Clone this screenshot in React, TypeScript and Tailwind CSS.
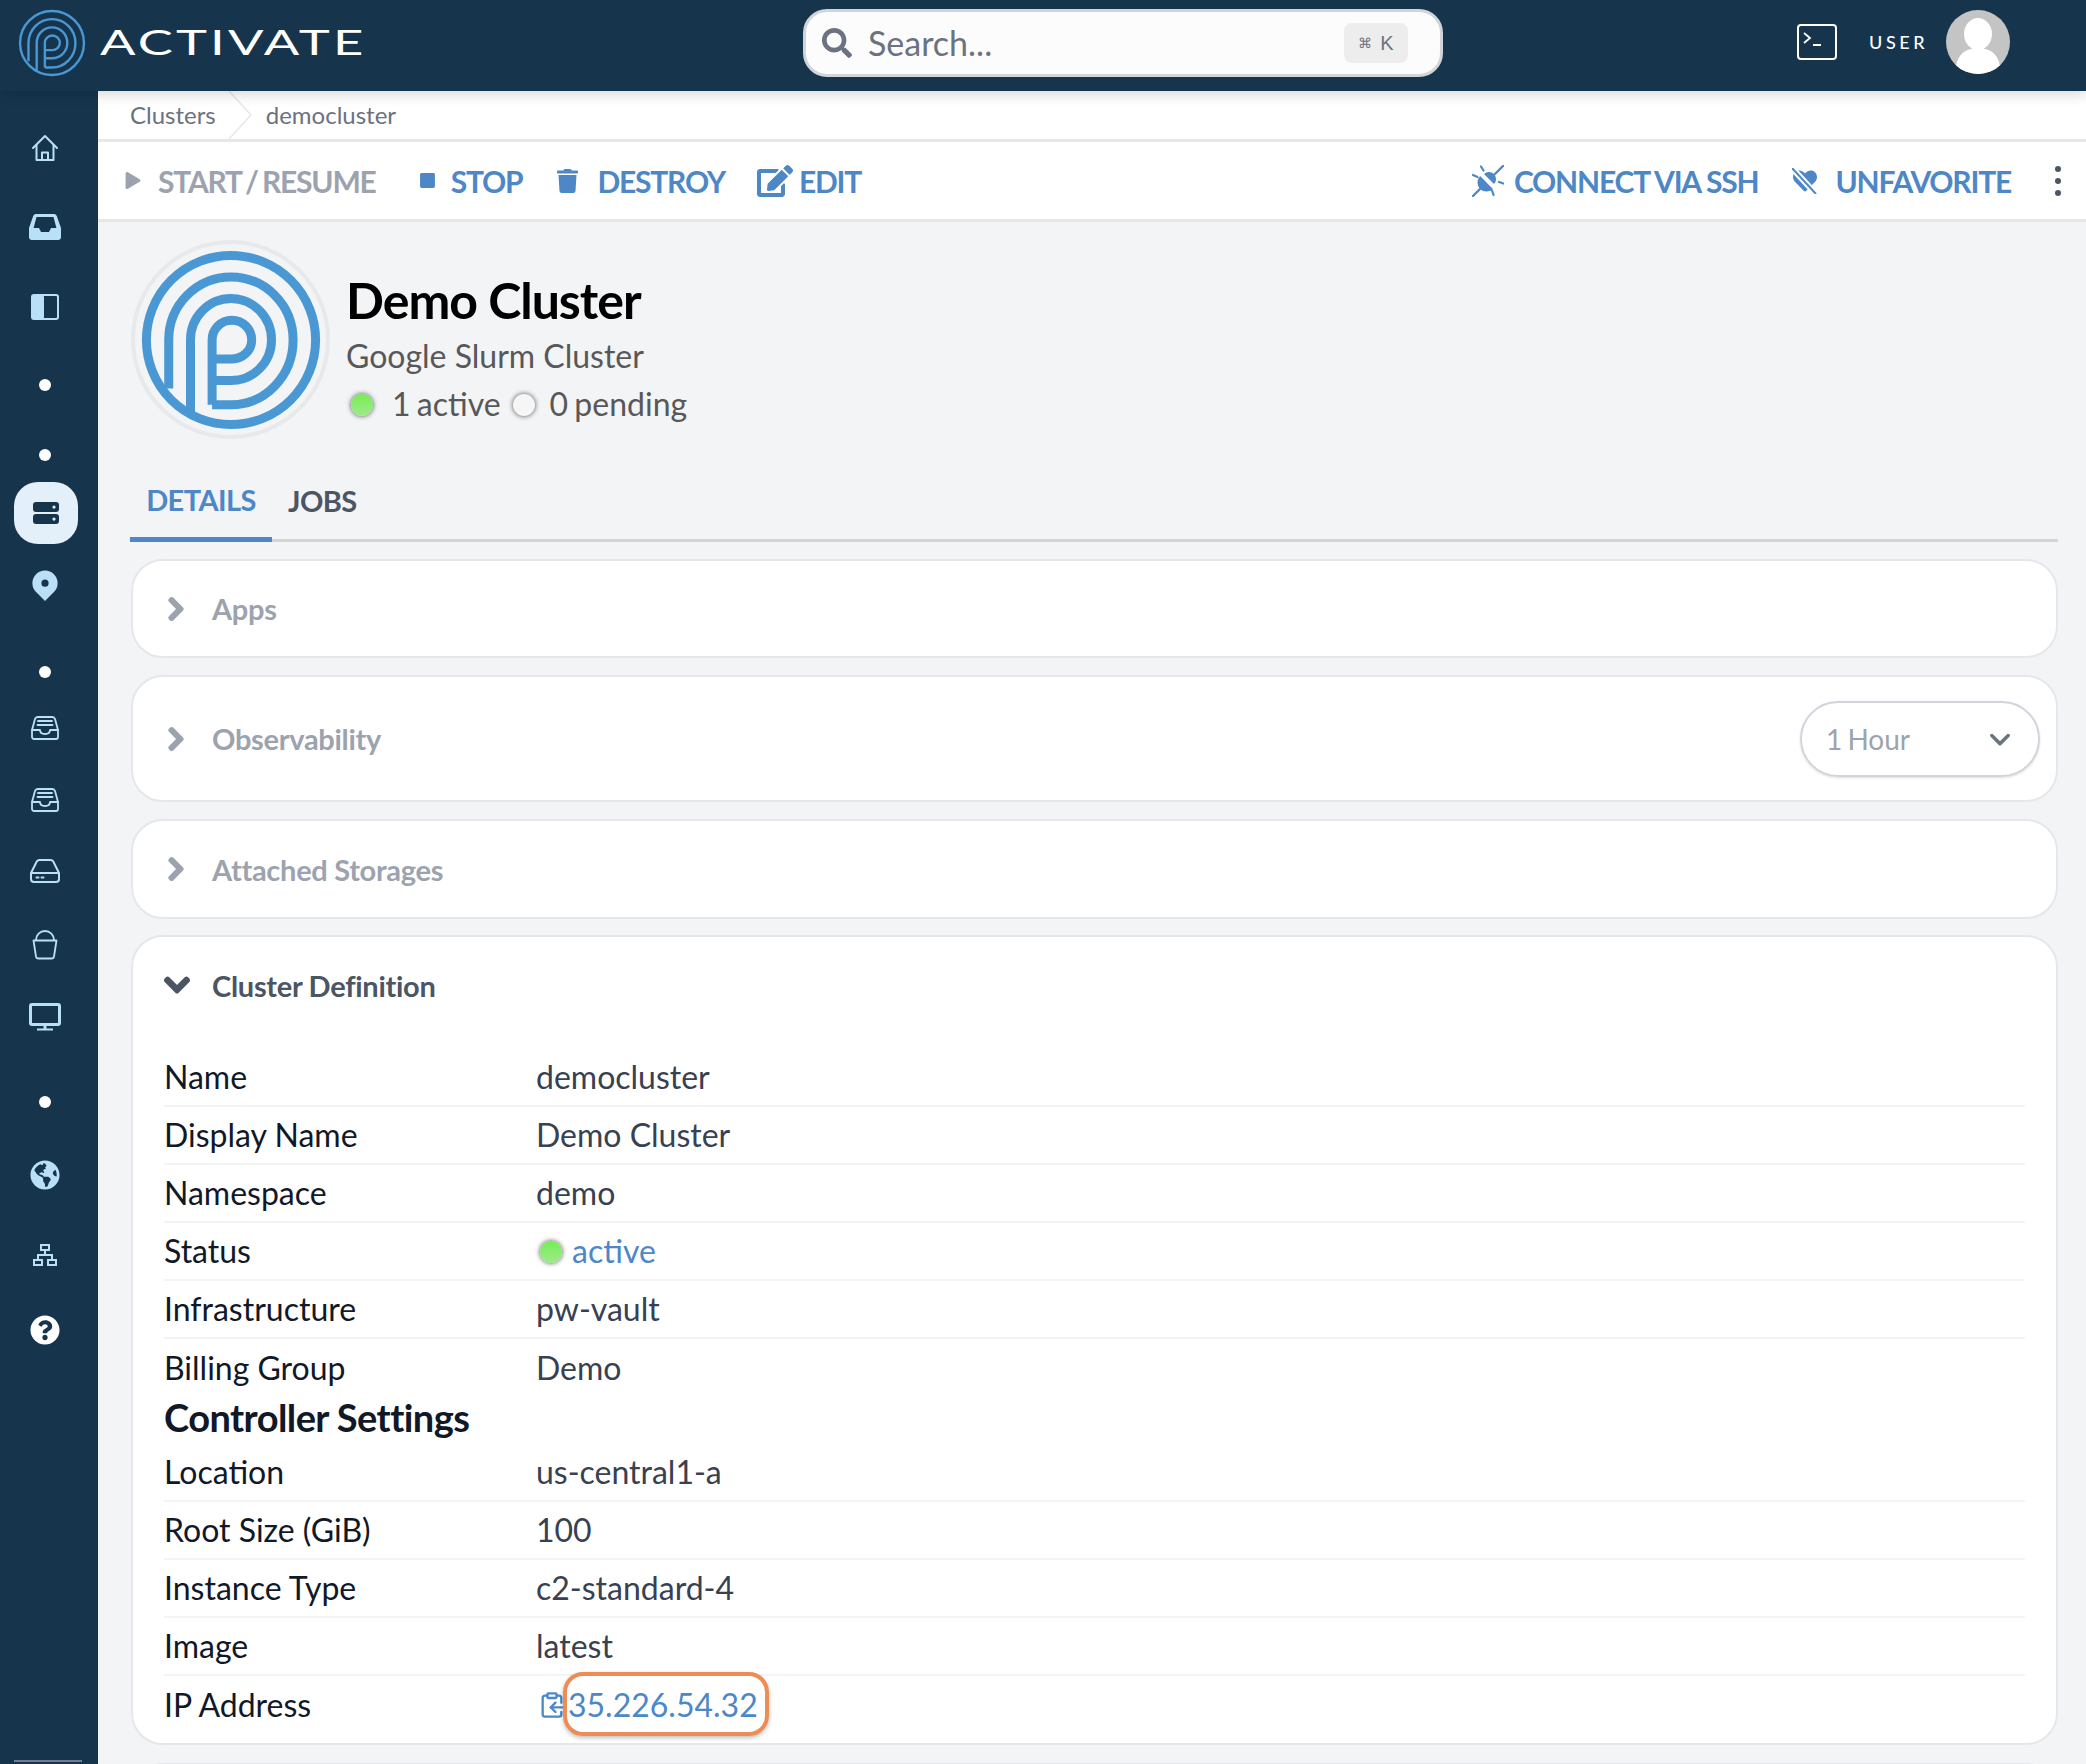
import React from "react";
import { FaChevronDown, FaChevronRight, FaEdit, FaGlobeAmericas, FaHeart, FaPlay, FaQuestionCircle, FaSearch, FaStop, FaTrash } from "react-icons/fa";
import { HiLocationMarker, HiOutlineChevronDown } from "react-icons/hi";
import { ClipboardCopy } from "lucide-react";

function Logo({ className, sw = 3 }: { className: string; sw?: number }) {
  return (
    <svg viewBox="0 0 100 100" className={className} fill="none" stroke="#4a98d3" strokeWidth={sw} strokeLinejoin="round">
      <circle cx="50" cy="50" r="47" />
      <path d="M15.4 77V50A34.5 35 0 0 1 84.5 50A34.5 36 0 0 1 50 86H39.5" />
      <path d="M27.5 90V50A22.5 23 0 0 1 72.5 50A22.5 22.5 0 0 1 50 72.5H39.5" />
      <path d="M39.5 86V50A11 11 0 0 1 61.5 50A11 10.5 0 0 1 50 60.5H39.5" />
    </svg>
  );
}

const ic = "#b9e0f7";

function Home() {
  return (
    <svg viewBox="0 0 28 28" className="h-[28px] w-[28px]" fill="none" stroke={ic} strokeWidth="2" strokeLinejoin="round" strokeLinecap="round">
      <path d="M2 14 14 2l12 12" />
      <path d="M5.5 11.5V26h17V11.5" />
      <path d="M11 26v-7.5h6V26" />
    </svg>
  );
}
function InboxSolid() {
  return (
    <svg viewBox="0 0 32 26" className="h-[26px] w-[32px]">
      <path fill={ic} fillRule="evenodd" d="M7 0h18a3 3 0 0 1 2.8 2L32 14v9a3 3 0 0 1-3 3H3a3 3 0 0 1-3-3v-9L4.200 2A3 3 0 0 1 7 0Zm.5 3L4.600 14H10l2 4h8l2-4h5.400L24.500 3Z" />
    </svg>
  );
}
function PanelIcon() {
  return (
    <svg viewBox="0 0 28 26" className="h-[26px] w-[28px]">
      <rect x="1" y="1" width="26" height="24" rx="2" fill="none" stroke={ic} strokeWidth="2" />
      <rect x="1" y="1" width="12" height="24" rx="2" fill={ic} />
    </svg>
  );
}
function Tray() {
  return (
    <svg viewBox="0 0 28 24" className="h-[24px] w-[28px]" fill="none" stroke={ic} strokeWidth="1.800" strokeLinecap="round" strokeLinejoin="round">
      <path d="M1 14 4 3a3 3 0 0 1 3-2h14a3 3 0 0 1 3 2l3 11v7a2 2 0 0 1-2 2H3a2 2 0 0 1-2-2Z" />
      <path d="M1 14h8c0 3 2 4 5 4s5-1 5-4h8" />
      <path d="M7 5h14M6.500 9h15" />
    </svg>
  );
}
function Drive() {
  return (
    <svg viewBox="0 0 30 24" className="h-[24px] w-[30px]" fill="none" stroke={ic} strokeWidth="2" strokeLinejoin="round">
      <path d="M1 14 6 4a4 4 0 0 1 3-3h12a4 4 0 0 1 3 3l5 10v6a3 3 0 0 1-3 3H4a3 3 0 0 1-3-3Z" />
      <path d="M1 14h28" />
      <path d="M6.500 18.500h2M11.500 18.500h2" strokeLinecap="round" />
    </svg>
  );
}
function Bucket() {
  return (
    <svg viewBox="0 0 26 30" className="h-[30px] w-[26px]" fill="none" stroke={ic} strokeWidth="1.800" strokeLinejoin="round">
      <path d="M1.500 10.500h23l-2.500 16a2.500 2.500 0 0 1-2.500 2h-13a2.500 2.500 0 0 1-2.500-2Z" />
      <path d="M4 10a9 9 0 0 1 18 0" />
    </svg>
  );
}
function Monitor() {
  return (
    <svg viewBox="0 0 32 28" className="h-[28px] w-[32px]" fill="none" stroke={ic}>
      <rect x="1.500" y="1.500" width="29" height="20" rx="1.500" strokeWidth="3" />
      <path d="M16 22v4" strokeWidth="3" />
      <path d="M8 26.500h16" strokeWidth="2" />
    </svg>
  );
}
function Servers() {
  return (
    <svg viewBox="0 0 26 22" className="h-[22px] w-[26px]">
      <path fill="#16354d" fillRule="evenodd" d="M3 0h20a3 3 0 0 1 3 3v4a3 3 0 0 1-3 3H3a3 3 0 0 1-3-3V3a3 3 0 0 1 3-3Zm18 3.500a1.600 1.600 0 1 0 0 3.200 1.600 1.600 0 0 0 0-3.200ZM3 12h20a3 3 0 0 1 3 3v4a3 3 0 0 1-3 3H3a3 3 0 0 1-3-3v-4a3 3 0 0 1 3-3Zm18 3.500a1.600 1.600 0 1 0 0 3.200 1.600 1.600 0 0 0 0-3.200Z" />
    </svg>
  );
}
function SiteMap() {
  return (
    <svg viewBox="0 0 24 22" className="h-[22px] w-[24px]" fill="none" stroke={ic} strokeWidth="2">
      <rect x="8" y="1" width="8" height="5" />
      <rect x="1" y="16" width="8" height="5" />
      <rect x="15" y="16" width="8" height="5" />
      <path d="M12 6v5M5 16v-5h14v5" />
    </svg>
  );
}
function Dot() {
  return <div className="h-[12px] w-[12px] rounded-full bg-white" />;
}

function SideSlot({ className, children }: { className: string; children: React.ReactNode }) {
  return <div className={"flex h-10 items-center justify-center " + className}>{children}</div>;
}

function Sidebar() {
  return (
    <aside className="flex h-[1673px] w-[98px] shrink-0 flex-col bg-[#16354d] pt-[37px] pr-[8px]">
      <SideSlot className="mt-0"><Home /></SideSlot>
      <SideSlot className="mt-[39px]"><InboxSolid /></SideSlot>
      <SideSlot className="mt-[40px]"><PanelIcon /></SideSlot>
      <SideSlot className="mt-[38px]"><Dot /></SideSlot>
      <SideSlot className="mt-[30px]"><Dot /></SideSlot>
      <SideSlot className="mt-[18px]">
        <div className="ml-[2px] flex h-[62px] w-[64px] shrink-0 items-center justify-center rounded-[24px] bg-[#e3f0fa]"><Servers /></div>
      </SideSlot>
      <SideSlot className="mt-[32px]"><HiLocationMarker className="h-[36px] w-[36px] text-[#b9e0f7]" /></SideSlot>
      <SideSlot className="mt-[47px]"><Dot /></SideSlot>
      <SideSlot className="mt-[16px]"><Tray /></SideSlot>
      <SideSlot className="mt-[32px]"><Tray /></SideSlot>
      <SideSlot className="mt-[31px]"><Drive /></SideSlot>
      <SideSlot className="mt-[34px]"><Bucket /></SideSlot>
      <SideSlot className="mt-[32px]"><Monitor /></SideSlot>
      <SideSlot className="mt-[45px]"><Dot /></SideSlot>
      <SideSlot className="mt-[33px]"><FaGlobeAmericas className="h-[30px] w-[30px] text-[#b9e0f7]" /></SideSlot>
      <SideSlot className="mt-[40px]"><SiteMap /></SideSlot>
      <SideSlot className="mt-[35px]"><FaQuestionCircle className="h-[30px] w-[30px] text-white" /></SideSlot>
      <div className="mt-auto mb-[2px] ml-[14px] h-[2px] w-[68px] bg-[#757b8e]" />
    </aside>
  );
}

function Header() {
  return (
    <header className="relative z-10 flex h-[91px] items-center bg-[#16354d] pb-[5px] shadow-[0_4px_12px_rgba(0,0,0,0.15)]">
      <Logo className="ml-[18px] h-[68px] w-[68px] shrink-0" sw={3.500} />
      <div className="-mt-[3px] ml-[14px] w-[270px] origin-left scale-x-[1.5] text-[35px] leading-none font-normal tracking-[0.06em] text-white">ACTIVATE</div>
      <div className="ml-[433px] flex h-[68px] w-[640px] items-center rounded-[24px] border-[3px] border-[#d1d5db] bg-[#fcfcfc] pr-[32px] pl-[16px]">
        <FaSearch className="h-[30px] w-[30px] text-[#6b7280]" />
        <span className="ml-[16px] flex-1 text-[34px] leading-none text-[#6b7280]">Search...</span>
        <span className="flex h-[40px] w-[64px] items-center justify-center gap-[8px] rounded-[8px] bg-[#ededee] font-[Liberation_Sans,sans-serif] text-[20px] text-[#6b7280]">
          <span className="text-[14px]">⌘</span>K
        </span>
      </div>
      <div className="-mt-[3px] ml-[354px] flex h-[36px] w-[40px] items-start rounded-[4px] border-2 border-white pt-[6px] pl-[4px]">
        <svg viewBox="0 0 22 14" className="h-[14px] w-[22px]" fill="none" stroke="white" strokeWidth="1.800"><path d="M1 1l6 5-6 5M10 13h8" /></svg>
      </div>
      <span className="-mt-[2px] ml-[32px] text-[18px] font-medium tracking-[0.2em] text-white">USER</span>
      <svg viewBox="0 0 64 64" className="-mt-[2px] ml-[18px] h-[64px] w-[64px] rounded-full bg-[#c4c4c4]">
        <ellipse cx="32" cy="24" rx="14" ry="16" fill="white" />
        <path d="M10 56c2-12 10-18 22-18s20 6 22 18a32 32 0 0 1-44 0Z" fill="white" />
      </svg>
    </header>
  );
}

function Btn({ icon, label, className, muted }: { icon: React.ReactNode; label: string; className: string; muted?: boolean }) {
  return (
    <div className={"flex items-center " + className}>
      {icon}
      <span className={"text-[30px] leading-none font-bold tracking-[-0.04em] " + (muted ? "text-[#9ca3af] [word-spacing:-2px]" : "text-[#4d87c6]")}>{label}</span>
    </div>
  );
}

function PlugOff() {
  return (
    <svg viewBox="0 0 32 32" className="mr-[10px] h-[32px] w-[32px]" fill="none" stroke="#4d87c6">
      <path d="M1 31l8-8M23 9l8-8" strokeWidth="2.400" strokeLinecap="round" />
      <path d="M8.100 11.100A9 9 0 0 0 20.900 23.900Z" fill="#4d87c6" stroke="none" />
      <path d="M12 9A7 7 0 0 1 22 19Z" fill="#4d87c6" stroke="none" />
      <path d="M9 1.500l2.500 4M1 10l4.500 2M27 17l4.500 1.500M20 25.500l1.500 4.500" strokeWidth="2.200" strokeLinecap="round" />
    </svg>
  );
}

function Toolbar() {
  return (
    <div className="flex h-[80px] items-center border-b-[3px] border-[#e5e7eb] bg-white pr-[25px] pl-[27px]">
      <Btn muted className="" label="START / RESUME" icon={<FaPlay className="mr-[17px] h-[17px] w-[16px] text-[#9ca3af]" />} />
      <Btn className="ml-[43px]" label="STOP" icon={<FaStop className="mr-[15px] h-[17px] w-[17px] text-[#4d87c6]" />} />
      <Btn className="ml-[35px]" label="DESTROY" icon={<FaTrash className="mr-[19px] h-[24px] w-[21px] text-[#4d87c6]" />} />
      <Btn className="ml-[32px]" label="EDIT" icon={<FaEdit className="mr-[6px] h-[32px] w-[36px] text-[#4d87c6]" />} />
      <div className="flex-1" />
      <Btn className="" label="CONNECT VIA SSH" icon={<PlugOff />} />
      <Btn className="ml-[34px]" label="UNFAVORITE" icon={
        <span className="relative mr-[17px] flex h-[26px] w-[26px] items-center justify-center">
          <FaHeart className="h-[24px] w-[24px] text-[#4d87c6]" />
          <svg viewBox="0 0 26 26" className="absolute inset-0" fill="none">
            <path d="M0 0 24 26" stroke="white" strokeWidth="6" />
            <path d="M0 0 24 26" stroke="#4d87c6" strokeWidth="2" />
          </svg>
        </span>
      } />
      <div className="ml-[44px] flex flex-col gap-[6px]">
        <span className="h-[6px] w-[6px] rounded-full bg-[#4b5563]" />
        <span className="h-[6px] w-[6px] rounded-full bg-[#4b5563]" />
        <span className="h-[6px] w-[6px] rounded-full bg-[#4b5563]" />
      </div>
    </div>
  );
}

function Breadcrumb() {
  return (
    <div className="relative flex h-[51px] items-center border-b-[3px] border-[#e5e7eb] bg-white pl-[32px] text-[24px] leading-none text-[#6b7280]">
      <span>Clusters</span>
      <svg viewBox="0 0 24 48" className="absolute top-0 left-[130px] h-[48px] w-[24px]" fill="none" stroke="#e5e7eb" strokeWidth="1.500"><path d="M1 0l22 24L1 48" /></svg>
      <span className="ml-[50px]">democluster</span>
    </div>
  );
}

function StatusDot({ off }: { off?: boolean }) {
  return (
    <span className={"inline-block h-[22px] w-[22px] shrink-0 rounded-full shadow-[0_0_5px_rgba(0,0,0,0.7)] " + (off ? "bg-[#f6f6f6]" : "bg-gradient-to-b from-[#72ee50] to-[#9fe88c]")} />
  );
}

function Profile() {
  return (
    <div className="flex h-[240px] items-start pt-[18px] pl-[33px]">
      <div className="flex h-[199px] w-[199px] items-center justify-center rounded-full border-[4px] border-[#e8e9eb]">
        <Logo className="h-[180px] w-[180px]" sw={5} />
      </div>
      <div className="ml-[16px] flex flex-col">
        <div className="mt-[31px] text-[50px] leading-[58px] font-bold tracking-[-0.02em] text-black">Demo Cluster</div>
        <div className="mt-[7px] text-[32px] leading-[40px] text-[#585858]">Google Slurm Cluster</div>
        <div className="mt-[8px] flex h-[40px] items-center text-[32px] text-[#585858] [word-spacing:-2px]">
          <span className="ml-[5px]"><StatusDot /></span>
          <span className="ml-[19px]">1 active</span>
          <span className="ml-[12px]"><StatusDot off /></span>
          <span className="ml-[15px]">0 pending</span>
        </div>
      </div>
    </div>
  );
}

function Tabs() {
  return (
    <div className="mr-[28px] ml-[32px] flex h-[80px] border-b-[3px] border-[#d1d5db] text-[29px] leading-none font-bold tracking-[-0.02em]">
      <div className="flex h-[80px] w-[142px] items-center justify-center border-b-[5px] border-[#4d87c6] text-[#4d87c6]">DETAILS</div>
      <div className="flex h-[77px] items-center pl-[16px] text-[#4b5563]">JOBS</div>
    </div>
  );
}

function Collapsed({ title, className, right }: { title: string; className: string; right?: React.ReactNode }) {
  return (
    <section className={"flex items-center rounded-[32px] border-2 border-[#e5e7eb] bg-white pl-[30px] " + className}>
      <FaChevronRight className="h-[26px] w-[26px] text-[#9ca3af]" strokeWidth={40} />
      <span className="ml-[23px] text-[29px] leading-none font-bold tracking-[-0.01em] text-[#9ca3af]">{title}</span>
      {right}
    </section>
  );
}

function Row({ label, children, last }: { label: string; children: React.ReactNode; last?: boolean }) {
  return (
    <div className={"grid h-[58px] grid-cols-[372px_1fr] items-center text-[32px] " + (last ? "" : "border-b-2 border-[#f3f4f6]")}>
      <span className="text-[#111827]">{label}</span>
      <span className="text-[#374151]">{children}</span>
    </div>
  );
}

function Definition() {
  return (
    <section className="mt-[16px] h-[810px] rounded-[32px] border-2 border-[#e5e7eb] bg-white px-[31px]">
      <div className="flex h-[96px] items-center">
        <FaChevronDown className="-ml-[1px] h-[28px] w-[28px] text-[#4b5563]" strokeWidth={40} />
        <span className="ml-[21px] text-[29px] leading-none font-bold tracking-[-0.01em] text-[#4b5563]">Cluster Definition</span>
      </div>
      <div className="mt-[16px]">
        <Row label="Name">democluster</Row>
        <Row label="Display Name">Demo Cluster</Row>
        <Row label="Namespace">demo</Row>
        <Row label="Status">
          <span className="flex items-center text-[#4d87c6]"><span className="mr-[10px] ml-[4px]"><StatusDot /></span>active</span>
        </Row>
        <Row label="Infrastructure">pw-vault</Row>
        <Row label="Billing Group" last>Demo</Row>
        <div className="flex h-[47px] items-center pb-[8px] text-[38px] leading-none font-bold tracking-[-0.015em] text-[#111827]">Controller Settings</div>
        <Row label="Location">us-central1-a</Row>
        <Row label="Root Size (GiB)">100</Row>
        <Row label="Instance Type">c2-standard-4</Row>
        <Row label="Image">latest</Row>
        <Row label="IP Address" last>
          <span className="relative flex items-center text-[#4d87c6]">
            <ClipboardCopy className="ml-[2px] h-[28px] w-[28px]" strokeWidth={2} />
            <span className="ml-[2px]">35.226.54.32</span>
            <span className="absolute top-[-9px] left-[27px] h-[64px] w-[206px] rounded-[20px] border-[4px] border-[#ee8c56] shadow-[0_2px_4px_rgba(0,0,0,0.25)]" />
          </span>
        </Row>
      </div>
    </section>
  );
}

export default function App() {
  return (
    <div className="h-[1764px] w-[2086px] overflow-hidden bg-[#f3f4f6] font-[Lato,sans-serif]">
      <Header />
      <div className="flex">
        <Sidebar />
        <main className="flex-1">
          <Breadcrumb />
          <Toolbar />
          <Profile />
          <Tabs />
          <div className="mt-[17px] mr-[28px] ml-[33px]">
            <Collapsed title="Apps" className="h-[99px]" />
            <Collapsed title="Observability" className="mt-[17px] h-[127px]" right={
              <div className="mr-[16px] ml-auto flex h-[76px] w-[240px] items-center justify-between rounded-full border-2 border-[#d1d5db] pr-[24px] pl-[24px] text-[28px] leading-none font-normal text-[#9ca3af] shadow-sm [word-spacing:-2px]">
                1 Hour
                <HiOutlineChevronDown className="h-[28px] w-[28px] text-[#6b7280]" strokeWidth={3} />
              </div>
            } />
            <Collapsed title="Attached Storages" className="mt-[17px] h-[100px]" />
            <Definition />
            <div className="mt-[18px] h-[40px] rounded-t-[32px] border-2 border-[#e5e7eb] bg-white" />
          </div>
        </main>
      </div>
    </div>
  );
}
